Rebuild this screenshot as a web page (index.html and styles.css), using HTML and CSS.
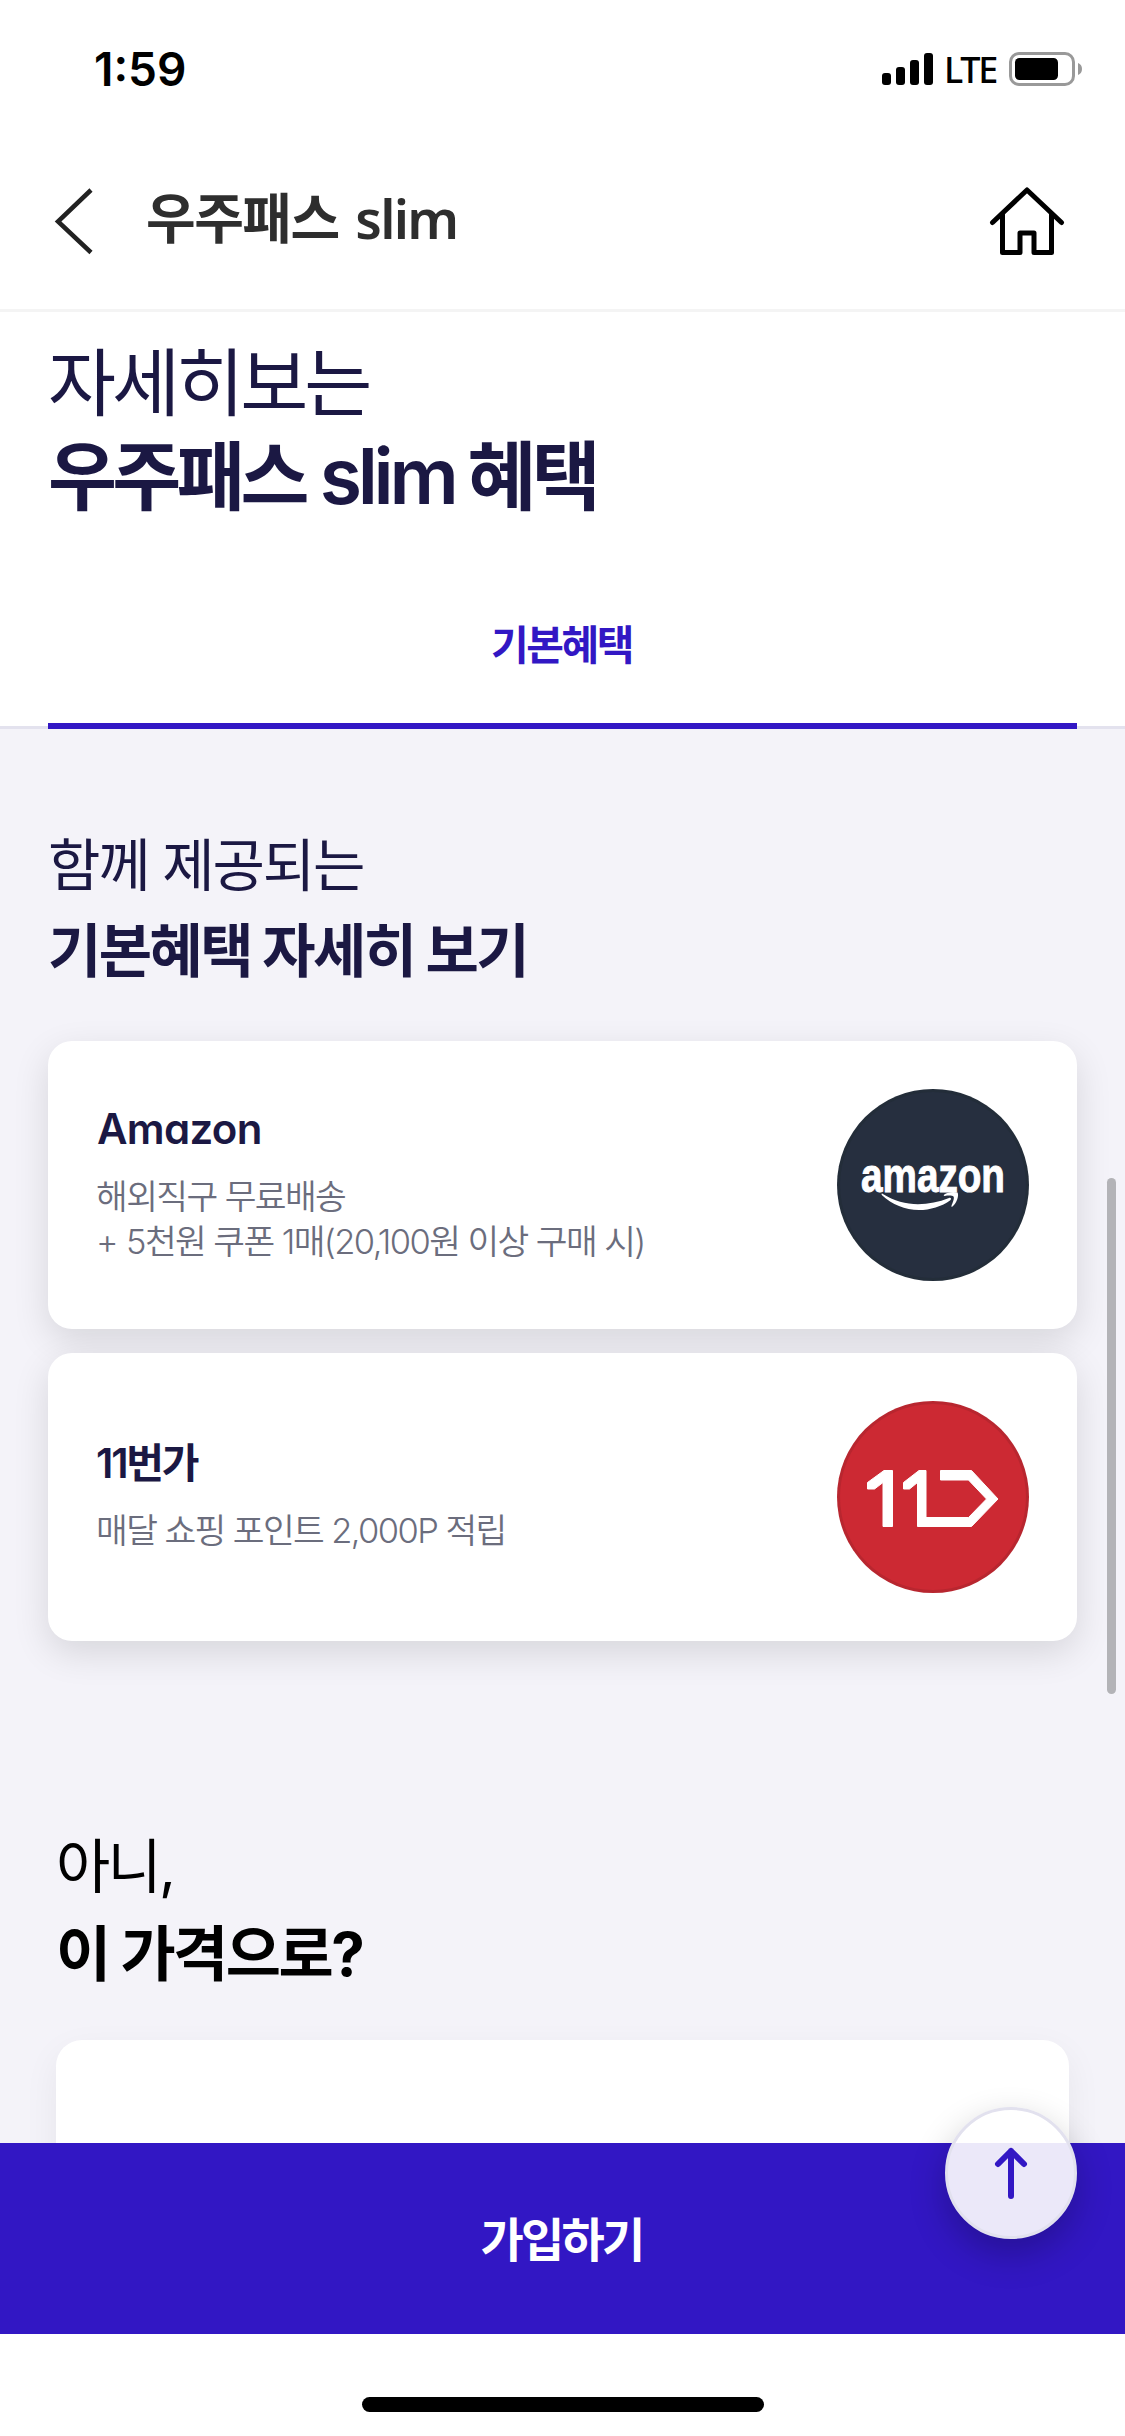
FILE: index.html
```html
<!DOCTYPE html>
<html lang="ko">
<head>
<meta charset="utf-8">
<title>우주패스 slim</title>
<link rel="stylesheet" href="styles.css">
</head>
<body>
<div class="screen">
  <div class="status">
    <span class="clock">1:59</span>
    <div class="indicators">
      <svg class="signal" width="51" height="34" viewBox="0 0 51 34"><rect x="0" y="21" width="9" height="12" rx="3"/><rect x="14" y="15" width="9" height="18" rx="3"/><rect x="28" y="8" width="9" height="25" rx="3"/><rect x="42" y="1" width="9" height="32" rx="3"/></svg>
      <span class="network">LTE</span>
      <svg class="battery" width="74" height="34" viewBox="0 0 74 34"><rect x="1.5" y="1.5" width="63" height="31" rx="8.5" fill="none" stroke="#999" stroke-width="3"/><rect x="6" y="6" width="43" height="22" rx="4.5"/><path d="M69 11c2.6 1 4 3.300 4 6s-1.400 5-4 6z" fill="#999"/></svg>
    </div>
  </div>

  <header class="header">
    <svg class="back" width="40" height="68" viewBox="0 0 40 68"><path d="M37 3 4 34.500 37 65.500" fill="none" stroke="#222" stroke-width="4.500"/></svg>
    <h1 class="title">우주패스 <span class="title-latin">slim</span></h1>
    <svg class="home" width="74" height="68" viewBox="0 0 74 68" fill="none" stroke="#000" stroke-width="5" stroke-linecap="round" stroke-linejoin="round"><path d="M2.500 35.500 37 3l34.500 32.500"/><path d="M12.500 27v38.500h17.500V46h14v19.500h17.500V27"/></svg>
  </header>

  <main class="content">
    <section class="hero">
      <p class="hero-light">자세히보는</p>
      <h2 class="hero-bold">우주패스 <span class="hero-latin">slim</span> 혜택</h2>
    </section>
    <nav class="tabs"><span class="tab">기본혜택</span></nav>

    <section class="benefits">
      <p class="lead">함께 제공되는</p>
      <h3 class="lead-bold">기본혜택 자세히 보기</h3>
      <div class="cards">
        <article class="card">
          <div class="card-text">
            <h4 class="card-title brand-latin">Amazon</h4>
            <p class="card-desc">해외직구 무료배송<br><span class="plus">+</span> 5천원 쿠폰 1매(20,100원 이상 구매 시)</p>
          </div>
          <svg class="logo" width="192" height="192" viewBox="0 0 192 192">
            <circle cx="96" cy="96" r="96" fill="#232d39"/><circle cx="96" cy="96" r="93" fill="#262f3f"/>
            <text class="amazon-word" x="24" y="102.500" textLength="144" lengthAdjust="spacingAndGlyphs">amazon</text>
            <path d="M45.500 104.800C57 112 69 115.200 81 115.200c10.500 0 21-2.200 31-6.200 1.800-.6 2.800 1 1.300 2.200C105 117.500 93 121 82 121c-14 0-27-5.500-37-14.700-.9-1-.4-2.200.5-1.500z" fill="#fff"/>
            <path d="M107 105.800c3.600-2.900 10-3.500 13.500-2.200 1.700 2.600-.6 10.800-5 14-.8.500-1.400.1-1-.8 1-2.600 3.200-7.600 2-9.200-1.200-1.500-6-1-8.700-.7-1 .1-1.400-.5-.8-1.100z" fill="#fff"/>
          </svg>
        </article>
        <article class="card">
          <div class="card-text">
            <h4 class="card-title">11번가</h4>
            <p class="card-desc">매달 쇼핑 포인트 2,000P 적립</p>
          </div>
          <svg class="logo" width="192" height="192" viewBox="0 0 192 192">
            <circle cx="96" cy="96" r="96" fill="#b8262f"/><circle cx="96" cy="96" r="93" fill="#cc2933"/>
            <g fill="#fff" stroke="#fff" stroke-width="1" stroke-linejoin="round">
              <path d="M30.500 81.500 47 69.500h8.500v56H46v-44l-8.500 6.500h-7z"/>
              <path d="M66.500 81.500 82 69.500h7v47h42.500L149.500 98 131.500 79h-28v-9.500H134.500L161 98l-26.500 27.500H80.500v-44L72.500 88h-6z"/>
            </g>
          </svg>
        </article>
      </div>
    </section>

    <section class="price">
      <p class="price-light">아니,</p>
      <h3 class="price-bold">이 가격으로?</h3>
      <div class="price-card"></div>
    </section>
  </main>

  <button class="join">가입하기</button>
  <div class="home-area"><div class="home-bar"></div></div>

  <div class="scrollbar"></div>
  <button class="to-top" aria-label="맨 위로">
    <svg width="36" height="56" viewBox="0 0 36 56" fill="none" stroke="#3217c4" stroke-width="6" stroke-linecap="round" stroke-linejoin="round"><path d="M18 51V6M5 19 18 6l13 13"/></svg>
  </button>
</div>
</body>
</html>
```
FILE: styles.css
```css
* { box-sizing: border-box; margin: 0; padding: 0; }
body { background: #fff; font-family: Inter, "Noto Sans CJK KR", sans-serif; }
h1, h2, h3, h4, p { white-space: nowrap; }
button { border: 0; font-family: inherit; }
svg { display: block; flex: none; overflow: visible; }

.screen { position: relative; display: flex; flex-direction: column; width: 1125px; height: 2436px; overflow: hidden; background: #fff; }

.status { flex: none; display: flex; justify-content: space-between; height: 132px; padding: 52px 42px 0 94px; }
.clock { font-size: 46px; font-weight: 600; line-height: 34px; letter-spacing: 0; }
.indicators { display: flex; align-items: flex-start; }
.network { width: 73px; padding-left: 11px; font: 500 36px/35px "Noto Sans", sans-serif; letter-spacing: -2.200px; }
.battery { margin-left: 3px; }

.header { flex: none; display: flex; align-items: center; height: 180px; padding: 0 61px 0 54px; border-bottom: 3px solid #f4f4f4; }
.title { flex: 1; margin: -8px 0 0 52px; font-family: "Noto Sans CJK KR", sans-serif; font-size: 54px; font-weight: 700; line-height: 70px; letter-spacing: -1.500px; color: #2e2e2e; }
.title-latin { margin-left: 3px; font-family: "Noto Sans", sans-serif; font-weight: 600; font-size: 54px; letter-spacing: -1.800px; }
.home { margin-top: 1px; }

.content { flex: 1; min-height: 0; overflow: hidden; background: #f4f3f9; }

.hero { height: 249px; padding: 25px 48px 0; background: #fff; color: #1b1843; line-height: 93px; }
.hero-light { font-size: 74px; font-weight: 400; letter-spacing: -4px; }
.hero-bold { font-size: 75px; font-weight: 700; letter-spacing: -4.800px; }
.hero-latin { margin-left: 2px; font-size: 77px; font-weight: 600; letter-spacing: -4.300px; }

.tabs { height: 168px; padding: 0 48px; background: linear-gradient(#e3e2ee, #e3e2ee) bottom / 100% 3px no-repeat #fff; }
.tab { display: block; height: 168px; padding: 6px 2px 0 0; border-bottom: 6px solid #3217c4; text-align: center; font-size: 41px; font-weight: 700; line-height: 156px; letter-spacing: -2.500px; color: #3217c4; }

.benefits { padding: 95px 48px 0; color: #1b1843; line-height: 84.500px; }
.lead { font-size: 57px; font-weight: 400; letter-spacing: -2.200px; }
.lead-bold { font-size: 58px; font-weight: 700; letter-spacing: -2.600px; }
.cards { display: flex; flex-direction: column; gap: 24px; margin-top: 48px; }
.card { display: flex; align-items: center; justify-content: space-between; height: 288px; padding: 0 48px; border-radius: 24px; background: #fff; box-shadow: 0 12px 36px rgba(0, 0, 0, .12); }
.card-text { padding-bottom: 2px; }
.card-title { font-size: 41px; font-weight: 600; line-height: 50px; letter-spacing: -2.200px; }
.brand-latin { padding-left: 1px; font-size: 42px; font-feature-settings: "cv11"; letter-spacing: -0.700px; }
.card-desc { margin-top: 21px; font-size: 34.500px; font-weight: 350; line-height: 44.500px; letter-spacing: -1.600px; color: #6b6d7d; }
.plus { margin-right: 1px; }
.amazon-word { font: 700 49px "Liberation Sans", sans-serif; fill: #fff; stroke: #fff; stroke-width: 1px; }

.price { padding: 183px 56px 0; color: #000; line-height: 86.500px; }
.price-light { font-size: 59px; font-weight: 400; letter-spacing: -2.800px; }
.price-bold { font-size: 60px; font-weight: 700; letter-spacing: -2.500px; }
.price-card { height: 300px; margin-top: 43px; border-radius: 26px; background: #fff; box-shadow: 0 12px 36px rgba(0, 0, 0, .06); }

.join { flex: none; height: 191px; padding: 0 2px 4px 0; background: #3217c4; color: #fff; font-size: 47px; font-weight: 700; letter-spacing: -2.700px; }
.home-area { flex: none; height: 102px; padding-top: 63px; background: #fff; }
.home-bar { width: 402px; height: 15px; margin: 0 auto; border-radius: 8px; background: #000; }

.scrollbar { position: absolute; left: 1107px; top: 1178px; width: 9px; height: 516px; border-radius: 5px; background: #b3b3b7; }
.to-top { position: absolute; left: 945px; top: 2107px; display: flex; align-items: center; justify-content: center; width: 132px; height: 132px; border: 3px solid #e2e1ee; border-radius: 50%; background: rgba(255, 255, 255, .9); box-shadow: 0 15px 36px rgba(0, 0, 0, .24); }
```
